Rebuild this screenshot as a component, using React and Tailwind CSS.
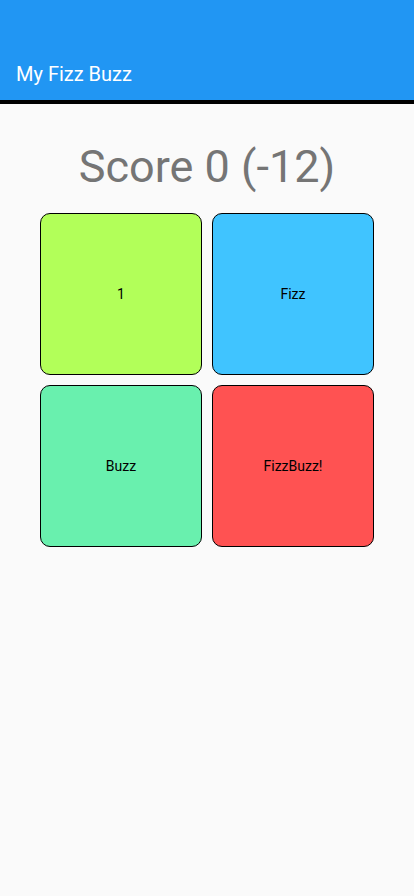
export default function App() {
  const cards = [
    { label: "1", bg: "bg-[#B2FF59]" },
    { label: "Fizz", bg: "bg-[#40C4FF]" },
    { label: "Buzz", bg: "bg-[#69F0AE]" },
    { label: "FizzBuzz!", bg: "bg-[#FF5252]" },
  ];
  return (
    <div className="w-[414px] h-[896px] bg-[#FAFAFA] flex flex-col" style={{ fontFamily: "Roboto, sans-serif" }}>
      <div className="h-[100px] bg-[#2196F3] flex items-end pb-[16px] px-4">
        <span className="text-white text-[20px] leading-none">My Fizz Buzz</span>
      </div>
      <div className="h-[4px] bg-black" />
      <div className="flex flex-col items-center">
        <div className="mt-[28px] text-[45px] leading-[70px] text-[#757575]">Score 0 (-12)</div>
        <div className="mt-[11px] grid grid-cols-2 gap-[10px]">
          {cards.map((c) => (
            <div
              key={c.label}
              className={`w-[162px] h-[162px] rounded-[10px] border border-black ${c.bg} flex items-center justify-center text-[14px] text-black`}
            >
              {c.label}
            </div>
          ))}
        </div>
      </div>
    </div>
  );
}
